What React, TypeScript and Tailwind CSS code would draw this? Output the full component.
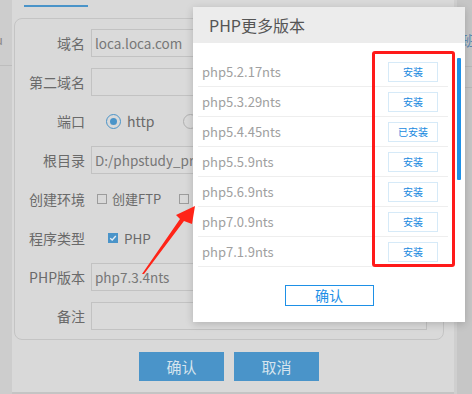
import React from "react";

const rows: { v: string; s: string }[] = [
  { v: "php5.2.17nts", s: "安装" },
  { v: "php5.3.29nts", s: "安装" },
  { v: "php5.4.45nts", s: "已安装" },
  { v: "php5.5.9nts", s: "安装" },
  { v: "php5.6.9nts", s: "安装" },
  { v: "php7.0.9nts", s: "安装" },
  { v: "php7.1.9nts", s: "安装" },
];

function Label({ children }: { children: React.ReactNode }) {
  return <div className="w-[70px] shrink-0 text-right text-[14px] leading-[28px] text-[#6a6a6a]">{children}</div>;
}

function Input({ value }: { value?: string }) {
  return (
    <div className="ml-[6px] mr-[16px] flex-1 h-[28px] border border-[#c2c2c2] bg-[#dadada] pl-[3px] text-[13.5px] leading-[26px] text-[#777777] overflow-hidden whitespace-nowrap">
      {value}
    </div>
  );
}

export default function App() {
  return (
    <div
      className="relative w-[472px] h-[394px] overflow-hidden bg-[#c4c4c4] flex"
      style={{ fontFamily: '"Noto Sans CJK SC", "Noto Sans", sans-serif' }}
    >
      {/* left page strip */}
      <div className="w-[12px] shrink-0 bg-[#cdcdcd] flex flex-col">
        <div className="h-[30px]" />
        <div className="text-[13px] leading-[20px] text-[#8a8a8a] -ml-[5px]">u</div>
        <div className="mt-[15px] h-px bg-[#bdbdbd]" />
      </div>

      {/* base dialog */}
      <div className="w-[442px] h-[392px] shrink-0 bg-[#d9d9d9] flex flex-col">
        <div className="h-[18px] pl-[12px]">
          <div className="w-[64px] h-[2px] mt-[5px] bg-[#4a94c9]" />
        </div>
        <div className="ml-[2px] w-[430px] border border-[#c4c4c4] rounded-[8px] pt-[10px] pb-[9px] flex flex-col gap-[11px]">
          <div className="flex items-center h-[28px]">
            <Label>域名</Label>
            <Input value="loca.loca.com" />
          </div>
          <div className="flex items-center h-[28px]">
            <Label>第二域名</Label>
            <Input />
          </div>
          <div className="flex items-center h-[28px]">
            <Label>端口</Label>
            <div className="ml-[21px] w-[15px] h-[15px] rounded-full border border-[#4a94c9] flex items-center justify-center">
              <div className="w-[7px] h-[7px] rounded-full bg-[#4a94c9]" />
            </div>
            <span className="ml-[6px] text-[14px] text-[#6a6a6a]">http</span>
            <div className="ml-[29px] w-[15px] h-[15px] rounded-full border border-[#b0b0b0]" />
          </div>
          <div className="flex items-center h-[28px]">
            <Label>根目录</Label>
            <Input value="D:/phpstudy_pro/WWW/loca.loca.com" />
          </div>
          <div className="flex items-center h-[28px]">
            <Label>创建环境</Label>
            <div className="ml-[12px] w-[10px] h-[10px] border border-[#9c9c9c]" />
            <span className="ml-[5px] text-[13px] text-[#6a6a6a]">创建FTP</span>
            <div className="ml-[18px] w-[10px] h-[10px] border border-[#9c9c9c]" />
            <span className="ml-[5px] text-[13px] text-[#6a6a6a]">创建数据库</span>
          </div>
          <div className="flex items-center h-[28px]">
            <Label>程序类型</Label>
            <div className="ml-[23px] w-[10px] h-[10px] bg-[#4a94c9] flex items-center justify-center">
              <svg width="8" height="8" viewBox="0 0 8 8">
                <path d="M1.2 4.2 L3.2 6 L6.8 2" stroke="#e6eef5" strokeWidth="1.3" fill="none" />
              </svg>
            </div>
            <span className="ml-[6px] text-[13.5px] text-[#6a6a6a]">PHP</span>
          </div>
          <div className="flex items-center h-[28px]">
            <Label>PHP版本</Label>
            <Input value="php7.3.4nts" />
          </div>
          <div className="flex items-center h-[28px]">
            <Label>备注</Label>
            <Input />
          </div>
        </div>
        <div className="mt-[12px] ml-[127px] flex gap-[10px]">
          <div className="w-[85px] h-[29px] bg-[#4a94c9] text-[#d6e4ee] text-[15px] leading-[29px] text-center">确认</div>
          <div className="w-[85px] h-[29px] bg-[#4a94c9] text-[#d6e4ee] text-[15px] leading-[29px] text-center">取消</div>
        </div>
      </div>

      {/* right page strip */}
      <div className="flex-1 flex flex-col border-l-[3px] border-[#cfcfcf] bg-[#c6c6c6]">
        <div className="h-[30px]" />
        <div className="text-[14px] leading-[20px] text-[#5b88b3] ml-[5px] whitespace-nowrap">班</div>
        <div className="mt-[16px] h-px bg-[#b8b8b8]" />
        <div className="mt-[20px] h-px bg-[#b8b8b8]" />
      </div>

      {/* modal */}
      <div className="absolute left-[193px] top-[7px] w-[272px] h-[315px] bg-white shadow-[0_2px_8px_rgba(0,0,0,0.18)] flex flex-col">
        <div className="h-[36px] bg-[#ececec] pl-[16px] text-[16px] leading-[36px] text-[#555555]">PHP更多版本</div>
        <div className="flex pt-[14px]">
          <div className="ml-[5px] w-[250px] flex flex-col">
            {rows.map((r) => (
              <div key={r.v} className="h-[30px] border-b border-[#eeeeee] flex items-center justify-between pl-[4px] pr-[10px]">
                <span className="text-[13px] text-[#a0a0a0]">{r.v}</span>
                <div className="w-[50px] h-[20px] border border-[#d6eaf8] text-[10px] leading-[18px] text-center text-[#1a8ae0]">{r.s}</div>
              </div>
            ))}
          </div>
          <div className="ml-[9px] w-[4px] flex flex-col">
            <div className="mt-[1px] h-[122px] bg-[#1e90e6] rounded-[1px]" />
          </div>
        </div>
        <div className="mt-[18px] flex justify-center">
          <div className="w-[89px] h-[21px] border border-[#1e90e6] text-[14px] leading-[19px] text-center text-[#1e90e6]">确认</div>
        </div>
        {/* red highlight */}
        <div className="absolute left-[179px] top-[44px] w-[83px] h-[216px] border-[3px] border-[#ff1a1a] rounded-[3px]" />
      </div>

      {/* red arrow */}
      <svg className="absolute left-0 top-0" width="472" height="394" viewBox="0 0 472 394">
        <polygon points="142,274 180,219 176,215 195,206 192,224 184,221 144,274" fill="#ff2418" />
      </svg>
    </div>
  );
}
